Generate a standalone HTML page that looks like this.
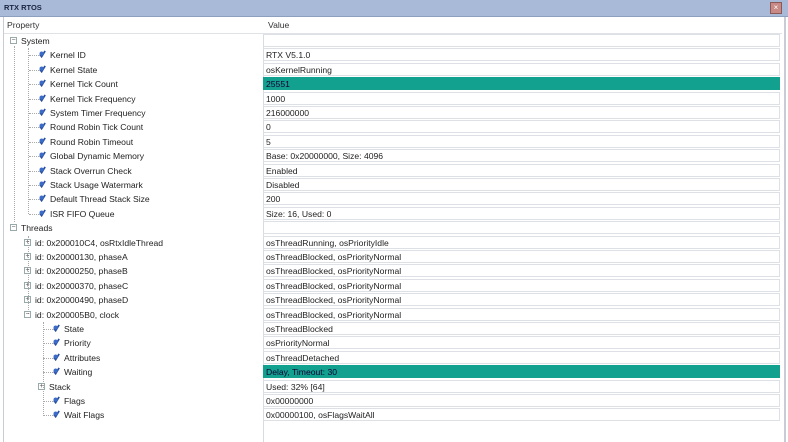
<!DOCTYPE html><html><head><style>
body{margin:0;width:788px;height:442px;overflow:hidden;background:#fff;font-family:"Liberation Sans",sans-serif;font-size:8.6px;color:#222;position:relative}
.t{position:absolute;left:0;top:0;width:788px;height:16px;background:#a9bad8;border-bottom:1px solid #8ea0c0}
.t span{position:absolute;left:4px;top:3px;font-weight:bold;font-size:7.5px;color:#1a2440}
.x{position:absolute;left:770px;top:2px;width:10px;height:10px;background:#c98a86;border:1px solid #8a5a58;color:#fff;font-size:8px;line-height:10px;text-align:center}
.p{position:absolute;left:3px;top:17px;width:780px;height:425px;border-left:1px solid #c8ccd4;border-right:2px solid #c8ccd4}
.h{position:absolute;left:4px;top:17px;width:778px;height:16px;border-bottom:1px solid #dfe3e8;background:#fff}
.h span{position:absolute;top:3px;color:#333}
.vl{position:absolute;left:263px;top:34px;width:1px;height:408px;background:#d8dce0}
.r{position:absolute;left:0;height:14.4px;width:788px}
.l{position:absolute;top:2px;white-space:nowrap}
.v{position:absolute;left:263px;top:0;width:517px;height:13px;border:1px solid #dde0e4;border-left:none;box-sizing:border-box;padding-left:3px;line-height:12px;white-space:nowrap}
.g{background:#12a08f;color:#103;border-color:#12a08f}
.e{position:absolute;top:3px;width:7px;height:7px;border:1px solid #9aa;box-sizing:border-box;font-size:7px;line-height:5px;text-align:center;color:#555}
.i{position:absolute;top:2px;width:7px;height:8px}
.d{position:absolute;top:7px;height:0;border-top:1px dotted #aaa}
.vd{position:absolute;border-left:1px dotted #aaa;width:0}
</style></head><body>
<div class="t"><span>RTX RTOS</span><div class="x">×</div></div>
<div class="p"></div>
<div class="h"><span style="left:3px">Property</span><span style="left:264px">Value</span></div>
<div class="vl"></div>
<div class="vd" style="left:14px;top:46px;height:176px"></div>
<div class="vd" style="left:28px;top:48px;height:166px"></div>
<div class="vd" style="left:28px;top:236px;height:78px"></div>
<div class="vd" style="left:43px;top:322px;height:94px"></div>
<svg width="0" height="0" style="position:absolute"><defs><symbol id="ic" viewBox="0 0 8 9"><path d="M1 5 L3 7.5 L7 1" stroke="#2a4fa0" stroke-width="2" fill="none"/><circle cx="3" cy="4" r="2.4" fill="#3a6cc8"/></symbol></defs></svg>
<div id="rows"></div>
<div class="r" style="top:34px"><div class="e" style="left:10px">−</div><div class="l" style="left:21px">System</div><div class="v"></div></div>
<div class="r" style="top:48.4px"><div class="d" style="left:29px;width:10px"></div><svg class="i" style="left:39px"><use href="#ic"/></svg><div class="l" style="left:50px">Kernel ID</div><div class="v">RTX V5.1.0</div></div>
<div class="r" style="top:62.8px"><div class="d" style="left:29px;width:10px"></div><svg class="i" style="left:39px"><use href="#ic"/></svg><div class="l" style="left:50px">Kernel State</div><div class="v">osKernelRunning</div></div>
<div class="r" style="top:77.2px"><div class="d" style="left:29px;width:10px"></div><svg class="i" style="left:39px"><use href="#ic"/></svg><div class="l" style="left:50px">Kernel Tick Count</div><div class="v g">25551</div></div>
<div class="r" style="top:91.6px"><div class="d" style="left:29px;width:10px"></div><svg class="i" style="left:39px"><use href="#ic"/></svg><div class="l" style="left:50px">Kernel Tick Frequency</div><div class="v">1000</div></div>
<div class="r" style="top:106px"><div class="d" style="left:29px;width:10px"></div><svg class="i" style="left:39px"><use href="#ic"/></svg><div class="l" style="left:50px">System Timer Frequency</div><div class="v">216000000</div></div>
<div class="r" style="top:120.4px"><div class="d" style="left:29px;width:10px"></div><svg class="i" style="left:39px"><use href="#ic"/></svg><div class="l" style="left:50px">Round Robin Tick Count</div><div class="v">0</div></div>
<div class="r" style="top:134.8px"><div class="d" style="left:29px;width:10px"></div><svg class="i" style="left:39px"><use href="#ic"/></svg><div class="l" style="left:50px">Round Robin Timeout</div><div class="v">5</div></div>
<div class="r" style="top:149.2px"><div class="d" style="left:29px;width:10px"></div><svg class="i" style="left:39px"><use href="#ic"/></svg><div class="l" style="left:50px">Global Dynamic Memory</div><div class="v">Base: 0x20000000, Size: 4096</div></div>
<div class="r" style="top:163.6px"><div class="d" style="left:29px;width:10px"></div><svg class="i" style="left:39px"><use href="#ic"/></svg><div class="l" style="left:50px">Stack Overrun Check</div><div class="v">Enabled</div></div>
<div class="r" style="top:178px"><div class="d" style="left:29px;width:10px"></div><svg class="i" style="left:39px"><use href="#ic"/></svg><div class="l" style="left:50px">Stack Usage Watermark</div><div class="v">Disabled</div></div>
<div class="r" style="top:192.4px"><div class="d" style="left:29px;width:10px"></div><svg class="i" style="left:39px"><use href="#ic"/></svg><div class="l" style="left:50px">Default Thread Stack Size</div><div class="v">200</div></div>
<div class="r" style="top:206.8px"><div class="d" style="left:29px;width:10px"></div><svg class="i" style="left:39px"><use href="#ic"/></svg><div class="l" style="left:50px">ISR FIFO Queue</div><div class="v">Size: 16, Used: 0</div></div>
<div class="r" style="top:221.2px"><div class="e" style="left:10px">−</div><div class="l" style="left:21px">Threads</div><div class="v"></div></div>
<div class="r" style="top:235.6px"><div class="e" style="left:24px">+</div><div class="l" style="left:35px">id: 0x200010C4, osRtxIdleThread</div><div class="v">osThreadRunning, osPriorityIdle</div></div>
<div class="r" style="top:250px"><div class="e" style="left:24px">+</div><div class="l" style="left:35px">id: 0x20000130, phaseA</div><div class="v">osThreadBlocked, osPriorityNormal</div></div>
<div class="r" style="top:264.4px"><div class="e" style="left:24px">+</div><div class="l" style="left:35px">id: 0x20000250, phaseB</div><div class="v">osThreadBlocked, osPriorityNormal</div></div>
<div class="r" style="top:278.8px"><div class="e" style="left:24px">+</div><div class="l" style="left:35px">id: 0x20000370, phaseC</div><div class="v">osThreadBlocked, osPriorityNormal</div></div>
<div class="r" style="top:293.2px"><div class="e" style="left:24px">+</div><div class="l" style="left:35px">id: 0x20000490, phaseD</div><div class="v">osThreadBlocked, osPriorityNormal</div></div>
<div class="r" style="top:307.6px"><div class="e" style="left:24px">−</div><div class="l" style="left:35px">id: 0x200005B0, clock</div><div class="v">osThreadBlocked, osPriorityNormal</div></div>
<div class="r" style="top:322px"><div class="d" style="left:43px;width:10px"></div><svg class="i" style="left:53px"><use href="#ic"/></svg><div class="l" style="left:64px">State</div><div class="v">osThreadBlocked</div></div>
<div class="r" style="top:336.4px"><div class="d" style="left:43px;width:10px"></div><svg class="i" style="left:53px"><use href="#ic"/></svg><div class="l" style="left:64px">Priority</div><div class="v">osPriorityNormal</div></div>
<div class="r" style="top:350.8px"><div class="d" style="left:43px;width:10px"></div><svg class="i" style="left:53px"><use href="#ic"/></svg><div class="l" style="left:64px">Attributes</div><div class="v">osThreadDetached</div></div>
<div class="r" style="top:365.2px"><div class="d" style="left:43px;width:10px"></div><svg class="i" style="left:53px"><use href="#ic"/></svg><div class="l" style="left:64px">Waiting</div><div class="v g">Delay, Timeout: 30</div></div>
<div class="r" style="top:379.6px"><div class="e" style="left:38px">+</div><div class="l" style="left:49px">Stack</div><div class="v">Used: 32% [64]</div></div>
<div class="r" style="top:394px"><div class="d" style="left:43px;width:10px"></div><svg class="i" style="left:53px"><use href="#ic"/></svg><div class="l" style="left:64px">Flags</div><div class="v">0x00000000</div></div>
<div class="r" style="top:408.4px"><div class="d" style="left:43px;width:10px"></div><svg class="i" style="left:53px"><use href="#ic"/></svg><div class="l" style="left:64px">Wait Flags</div><div class="v">0x00000100, osFlagsWaitAll</div></div>
</body></html>
